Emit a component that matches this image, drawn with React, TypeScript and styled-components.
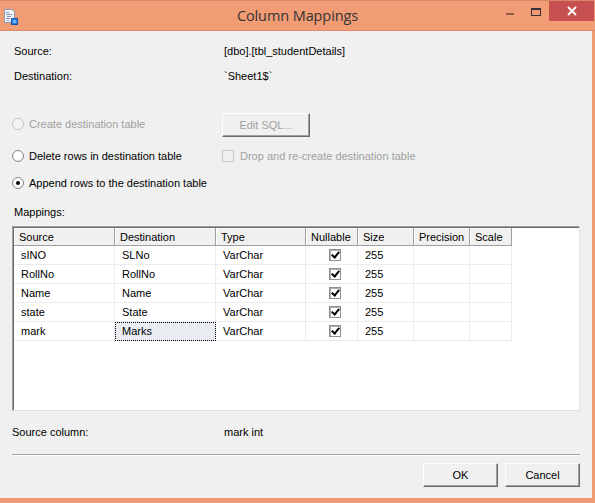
import styled, { createGlobalStyle } from 'styled-components';

const GlobalStyle = createGlobalStyle`
  html, body {
    margin: 0;
    padding: 0;
    background: #f0f0f0;
  }
  body {
    font-family: "Liberation Sans", Arial, sans-serif;
    font-size: 11px;
    color: #000;
  }
  * { box-sizing: border-box; }
`;

type Mapping = { source: string; dest: string; type: string; nullable: boolean; size: string };

const mappings: Mapping[] = [
  { source: 'sINO', dest: 'SLNo', type: 'VarChar', nullable: true, size: '255' },
  { source: 'RollNo', dest: 'RollNo', type: 'VarChar', nullable: true, size: '255' },
  { source: 'Name', dest: 'Name', type: 'VarChar', nullable: true, size: '255' },
  { source: 'state', dest: 'State', type: 'VarChar', nullable: true, size: '255' },
  { source: 'mark', dest: 'Marks', type: 'VarChar', nullable: true, size: '255' },
];

const columns = ['Source', 'Destination', 'Type', 'Nullable', 'Size', 'Precision', 'Scale'];

const App = () => {
  return (
    <>
      <GlobalStyle />
      <Window>
        <TitleBar>
          <TitleLeft>
            <AppIcon />
          </TitleLeft>
          <Title>Column Mappings</Title>
          <Controls>
            <CtrlButton>
              <MinGlyph />
            </CtrlButton>
            <CtrlButton>
              <MaxGlyph />
            </CtrlButton>
            <CloseButton>
              <svg width="10" height="10" viewBox="0 0 10 10">
                <path d="M1 1 L9 9 M9 1 L1 9" stroke="#fff" strokeWidth="2" />
              </svg>
            </CloseButton>
          </Controls>
        </TitleBar>

        <Frame>
          <InfoGrid>
            <Label>Source:</Label>
            <Value>[dbo].[tbl_studentDetails]</Value>
            <Label>Destination:</Label>
            <Value>`Sheet1$`</Value>
          </InfoGrid>

          <OptionRow $height={24} $top={25}>
            <RadioLabel $disabled>
              <Radio $disabled />
              Create destination table
            </RadioLabel>
            <PushButton disabled $width={88}>Edit SQL...</PushButton>
          </OptionRow>
          <OptionRow $height={22} $top={8}>
            <RadioLabel>
              <Radio />
              Delete rows in destination table
            </RadioLabel>
            <CheckLabel $disabled>
              <CheckBox $disabled />
              Drop and re-create destination table
            </CheckLabel>
          </OptionRow>
          <OptionRow $height={22} $top={5}>
            <RadioLabel>
              <Radio $checked />
              Append rows to the destination table
            </RadioLabel>
          </OptionRow>

          <SectionLabel>Mappings:</SectionLabel>

          <GridBox>
            <Grid>
              {columns.map((c) => (
                <HeaderCell key={c}>{c}</HeaderCell>
              ))}
              {mappings.map((m) => (
                <Row key={m.source}>
                  <Cell>{m.source}</Cell>
                  <Cell $focused={m.dest === 'Marks'}>{m.dest}</Cell>
                  <Cell>{m.type}</Cell>
                  <Cell $center>{m.nullable && <CheckBox $checked />}</Cell>
                  <Cell>{m.size}</Cell>
                  <Cell />
                  <Cell />
                </Row>
              ))}
            </Grid>
          </GridBox>

          <FooterInfo>
            <Label>Source column:</Label>
            <Value>mark int</Value>
          </FooterInfo>

          <Separator />

          <ButtonBar>
            <PushButton $width={75}>OK</PushButton>
            <PushButton $width={75}>Cancel</PushButton>
          </ButtonBar>
        </Frame>
      </Window>
    </>
  );
};

export default App;

const AppIcon = () => (
  <svg width="15" height="16" viewBox="0 0 15 16">
    <path d="M1.5 0.5 H9 L11.5 3 V13.5 H1.5 Z" fill="#f4f6fa" stroke="#8a9ab8" />
    <path d="M3 3.5 H6 M3 5.5 H9 M4 7.5 H8 M3 9.5 H7 M4 11.5 H6" stroke="#7f91b5" strokeWidth="1" />
    <rect x="8.5" y="9.5" width="6" height="6" fill="#2f7fe0" stroke="#1d56a8" />
    <rect x="10" y="11" width="3" height="3" fill="#6fb1f5" />
  </svg>
);

const Window = styled.div`
  width: 595px;
  height: 503px;
  display: flex;
  flex-direction: column;
  background: #f0f0f0;
`;

const TitleBar = styled.div`
  height: 31px;
  display: grid;
  grid-template-columns: 1fr auto 1fr;
  background: #f29c75;
  border-top: 1px solid #d9896a;
  border-bottom: 1px solid #d9896a;
`;

const TitleLeft = styled.div`
  display: flex;
  align-items: center;
  padding-left: 3px;
  padding-top: 2px;
`;

const Title = styled.div`
  font-family: "Open Sans", "Noto Sans", sans-serif;
  font-size: 14.5px;
  color: #333;
  line-height: 29px;
  letter-spacing: -0.1px;
`;

const Controls = styled.div`
  display: flex;
  justify-content: flex-end;
  align-items: flex-start;
  padding-right: 1px;
`;

const CtrlButton = styled.div`
  width: 26px;
  height: 20px;
  display: flex;
  align-items: center;
  justify-content: center;
`;

const MinGlyph = styled.div`
  width: 8px;
  height: 2px;
  margin-top: 6px;
  background: #8f5e48;
`;

const MaxGlyph = styled.div`
  width: 10px;
  height: 8px;
  margin-top: 2px;
  border: 1px solid #333;
  border-top-width: 2px;
`;

const CloseButton = styled.div`
  width: 45px;
  height: 20px;
  background: #c75050;
  display: flex;
  align-items: center;
  justify-content: center;
`;

const Frame = styled.div`
  flex: 1;
  display: flex;
  flex-direction: column;
  padding: 7px 12px 11px 12px;
  border-right: 3px solid #ee9a73;
  border-bottom: 5px solid #ee9a73;
`;

const InfoGrid = styled.div`
  display: grid;
  grid-template-columns: 212px 1fr;
  grid-auto-rows: 25px;
  align-items: center;
`;

const Label = styled.div`
  padding-left: 2px;
`;

const Value = styled.div``;

const OptionRow = styled.div<{ $height: number; $top: number }>`
  display: grid;
  grid-template-columns: 210px auto;
  justify-content: start;
  align-items: center;
  height: ${(p) => p.$height}px;
  margin-top: ${(p) => p.$top}px;
`;

const RadioLabel = styled.label<{ $disabled?: boolean }>`
  display: flex;
  align-items: center;
  gap: 5px;
  color: ${(p) => (p.$disabled ? '#a0a0a0' : '#000')};
  margin-top: ${(p) => (p.$disabled ? '-2px' : '0')};
`;

const Radio = styled.span<{ $checked?: boolean; $disabled?: boolean }>`
  width: 12px;
  height: 12px;
  border-radius: 50%;
  border: 1px solid ${(p) => (p.$disabled ? '#c4c4c4' : '#8a8a8a')};
  background: ${(p) =>
    p.$disabled ? '#f4f4f4' : 'radial-gradient(circle at 45% 40%, #ffffff 40%, #e2e2e2 100%)'};
  display: flex;
  align-items: center;
  justify-content: center;
  &::after {
    content: '';
    display: ${(p) => (p.$checked ? 'block' : 'none')};
    width: 4px;
    height: 4px;
    border-radius: 50%;
    background: #000;
  }
`;

const CheckLabel = styled.label<{ $disabled?: boolean }>`
  display: flex;
  align-items: center;
  gap: 6px;
  color: ${(p) => (p.$disabled ? '#a0a0a0' : '#000')};
`;

const CheckBox = styled.span<{ $checked?: boolean; $disabled?: boolean }>`
  width: 12px;
  height: 12px;
  border: 1px solid ${(p) => (p.$disabled ? '#c8c8c8' : '#8e8f8f')};
  background: ${(p) => (p.$disabled ? '#f0f0f0' : '#fff')};
  box-shadow: ${(p) => (p.$disabled ? 'none' : 'inset 1px 1px 0 #b0b0b0')};
  position: relative;
  &::after {
    content: '';
    display: ${(p) => (p.$checked ? 'block' : 'none')};
    position: absolute;
    left: 3px;
    top: 0px;
    width: 3px;
    height: 6px;
    border: solid #000;
    border-width: 0 2px 2px 0;
    transform: rotate(40deg);
  }
`;

const PushButton = styled.button<{ $width: number }>`
  width: ${(p) => p.$width}px;
  height: 24px;
  font-family: "Liberation Sans", Arial, sans-serif;
  font-size: 11px;
  color: #000;
  background: #f0f0f0;
  border: 1px solid;
  border-color: #ffffff #696969 #696969 #ffffff;
  box-shadow: inset -1px -1px 0 #a0a0a0;
  padding: 0;
  &:disabled {
    color: #a0a0a0;
  }
`;

const SectionLabel = styled.div`
  height: 18px;
  margin-top: 9px;
  padding-left: 2px;
  display: flex;
  align-items: center;
`;

const GridBox = styled.div`
  margin-top: 5px;
  height: 185px;
  background: #fff;
  border: 1px solid;
  border-color: #a0a0a0 #e3e3e3 #e3e3e3 #a0a0a0;
  box-shadow: inset 1px 1px 0 #696969;
  padding: 1px;
`;

const Grid = styled.div`
  display: grid;
  grid-template-columns: 101px 101px 90px 52px 56px 56px 42px;
  grid-template-rows: 18px;
  grid-auto-rows: 19px;
  justify-content: start;
`;

const HeaderCell = styled.div`
  background: #f0f0f0;
  border-right: 1px solid #a0a0a0;
  border-bottom: 1px solid #a0a0a0;
  box-shadow: inset 1px 1px 0 #fff;
  padding-left: 5px;
  display: flex;
  align-items: center;
`;

const Row = styled.div`
  display: contents;
`;

const Cell = styled.div<{ $focused?: boolean; $center?: boolean }>`
  border-right: 1px solid #ececec;
  border-bottom: 1px solid #ececec;
  padding-left: 7px;
  display: flex;
  align-items: center;
  justify-content: ${(p) => (p.$center ? 'center' : 'flex-start')};
  background: ${(p) => (p.$focused ? '#e9edf1' : 'transparent')};
  outline: ${(p) => (p.$focused ? '1px dotted #000' : 'none')};
  outline-offset: -1px;
`;

const FooterInfo = styled.div`
  display: grid;
  grid-template-columns: 212px 1fr;
  height: 18px;
  margin-top: 12px;
  align-items: center;
  ${Label} {
    padding-left: 0;
  }
`;

const Separator = styled.div`
  margin-top: 13px;
  height: 2px;
  border-top: 1px solid #a0a0a0;
  border-bottom: 1px solid #fff;
`;

const ButtonBar = styled.div`
  margin-top: 7px;
  display: flex;
  justify-content: flex-end;
  gap: 7px;
`;
